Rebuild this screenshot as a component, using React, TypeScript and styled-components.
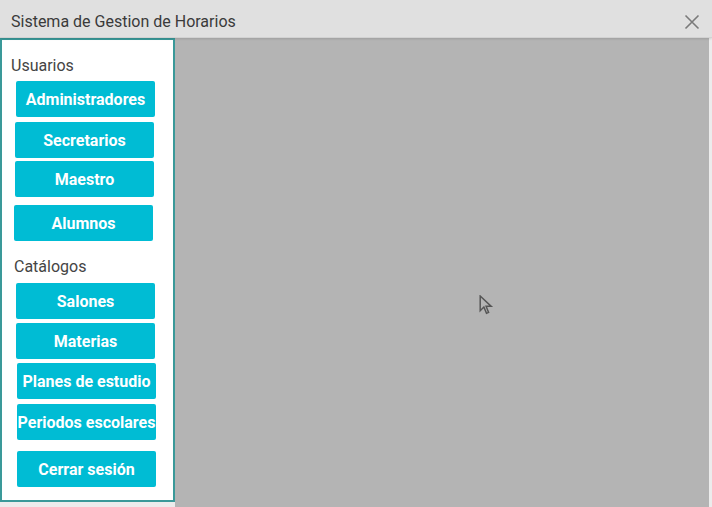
import React from "react";
import styled, { createGlobalStyle } from "styled-components";

const Global = createGlobalStyle`
  html, body { margin: 0; padding: 0; }
  body {
    width: 712px;
    height: 507px;
    overflow: hidden;
    background: #ececec;
    font-family: Roboto, "Liberation Sans", sans-serif;
  }
`;

const Window = styled.div`
  width: 712px;
  height: 507px;
  display: flex;
  flex-direction: column;
  background: #ececec;
`;

const TitleBar = styled.div`
  height: 37px;
  flex: none;
  display: flex;
  align-items: center;
  justify-content: space-between;
  padding: 0 10px 0 11px;
  background: #e0e0e0;
  border-bottom: 1px solid #d2d2d2;
  position: relative;
  z-index: 1;
  box-shadow: 0 1px 2px rgba(0, 0, 0, 0.12);
`;

const Title = styled.span`
  font-size: 16px;
  color: #3a3a3a;
  padding-top: 5px;
`;

const CloseBtn = styled.div`
  width: 20px;
  height: 20px;
  display: flex;
  align-items: center;
  justify-content: center;
  margin-top: 7px;
`;

const Body = styled.div`
  flex: 1;
  display: flex;
  flex-direction: row;
  padding-right: 3px;
`;

const SideWrap = styled.div`
  width: 175px;
  flex: none;
  display: flex;
  flex-direction: column;
  padding-bottom: 5px;
`;

const Sidebar = styled.nav`
  flex: 1;
  box-sizing: border-box;
  background: #ffffff;
  border: 2px solid #3a9999;
  display: flex;
  flex-direction: column;
  padding-top: 16px;
`;

const SectionLabel = styled.div<{ $left: number; $mt?: number }>`
  font-size: 16px;
  color: #444;
  margin-left: ${(p) => p.$left}px;
  margin-top: ${(p) => p.$mt ?? 0}px;
  margin-bottom: 6px;
  line-height: 19px;
`;

const NavButton = styled.button<{ $left: number; $mt: number }>`
  width: 139px;
  height: 36px;
  margin-left: ${(p) => p.$left}px;
  margin-top: ${(p) => p.$mt}px;
  background: #00bcd4;
  color: #ffffff;
  border: none;
  border-radius: 2px;
  font-family: Roboto, "Liberation Sans", sans-serif;
  font-weight: 700;
  font-size: 16px;
  padding: 0;
  white-space: nowrap;
  cursor: pointer;
`;

const Content = styled.main`
  flex: 1;
  background: #b4b4b4;
  position: relative;
`;

const Cursor = styled.svg`
  position: absolute;
  left: 304px;
  top: 257px;
`;

export default function App() {
  return (
    <>
      <Global />
      <Window>
        <TitleBar>
          <Title>Sistema de Gestion de Horarios</Title>
          <CloseBtn>
            <svg width="16" height="16" viewBox="0 0 16 16">
              <path d="M1.5 1.5 L14.5 14.5 M14.5 1.5 L1.5 14.5" stroke="#7a7a7a" strokeWidth="1.6" fill="none" />
            </svg>
          </CloseBtn>
        </TitleBar>
        <Body>
          <SideWrap>
            <Sidebar>
              <SectionLabel $left={9}>Usuarios</SectionLabel>
              <NavButton $left={14} $mt={0}>Administradores</NavButton>
              <NavButton $left={13} $mt={5}>Secretarios</NavButton>
              <NavButton $left={13} $mt={3}>Maestro</NavButton>
              <NavButton $left={12} $mt={8}>Alumnos</NavButton>
              <SectionLabel $left={12} $mt={16}>Catálogos</SectionLabel>
              <NavButton $left={14} $mt={1}>Salones</NavButton>
              <NavButton $left={14} $mt={4}>Materias</NavButton>
              <NavButton $left={15} $mt={4}>Planes de estudio</NavButton>
              <NavButton $left={15} $mt={5}>Periodos escolares</NavButton>
              <NavButton $left={15} $mt={11}>Cerrar sesión</NavButton>
            </Sidebar>
          </SideWrap>
          <Content>
            <Cursor width="15" height="21" viewBox="0 0 14 20">
              <path d="M1 1 L1 15 L4.5 11.5 L7 17.5 L9 16.6 L6.6 10.8 L11.5 10.8 Z" fill="none" stroke="#555" strokeWidth="1.4" strokeLinejoin="miter" />
            </Cursor>
          </Content>
        </Body>
      </Window>
    </>
  );
}
